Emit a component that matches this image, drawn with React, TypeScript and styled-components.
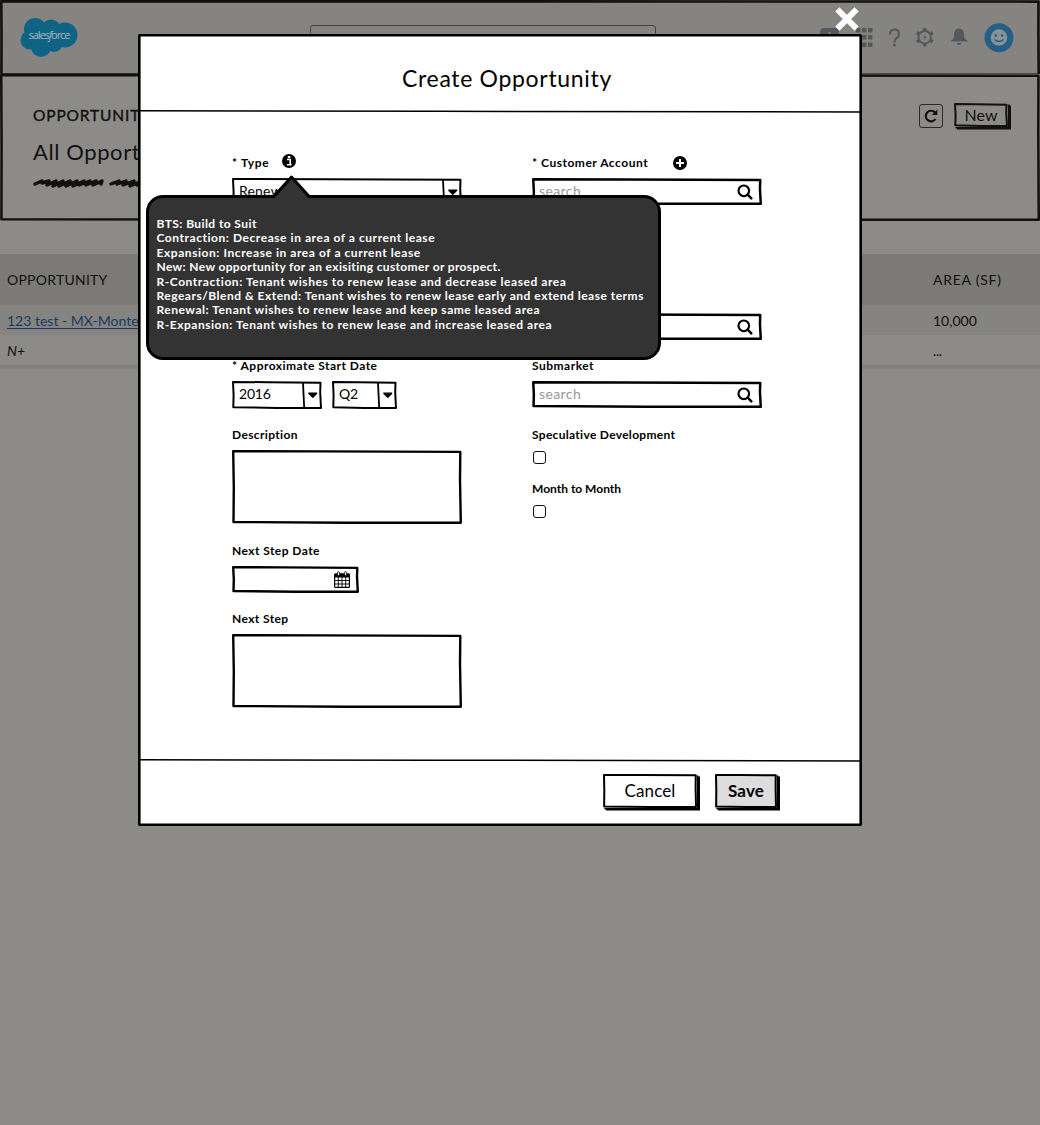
import React from "react";
import styled, { createGlobalStyle } from "styled-components";

const INK = "#000";
const DIM = "#12110f";

const Global = createGlobalStyle`
  *, *::before, *::after { box-sizing: border-box; }
  body { margin: 0; background: #8c8b88; }
  body, input, button, textarea { font-family: Lato, "Open Sans", sans-serif; }
`;

/* Hand-drawn rectangle outline stretched over its parent. */
const Outline = styled.svg`
  position: absolute;
  inset: 0;
  width: 100%;
  height: 100%;
  overflow: visible;
  pointer-events: none;
`;

function Sketch({ w, h, t = 2, color = INK, k = 1 }: { w: number; h: number; t?: number; color?: string; k?: number }) {
  const i = t / 2;
  return (
    <Outline viewBox={`0 0 ${w} ${h}`} fill="none" stroke={color} strokeWidth={t} strokeLinejoin="round" strokeLinecap="round">
      <path d={`M${i} ${i} L${w * 0.4} ${i + 0.2 * k} L${w - i - 0.5 * k} ${i + 0.7 * k} L${w - i - 0.8 * k} ${h * 0.4} L${w - i} ${h - i} L${w * 0.5} ${h - i} L${i + 0.3 * k} ${h - i - 0.8 * k} L${i + 0.6 * k} ${h * 0.5} Z`} />
    </Outline>
  );
}

const Page = styled.div`
  position: relative;
  width: 1040px;
  height: 1125px;
  overflow: hidden;
  background: #8c8b88;
  color: ${DIM};
`;
const TopBar = styled.header`
  position: relative;
  height: 76px;
  padding: 0 25px 0 20px;
  background: #868481;
  display: flex;
  align-items: center;
`;
const SearchStub = styled.div`
  width: 346px;
  height: 27px;
  margin: 0 159px 0 232px;
  border: 1px solid #454442;
  border-radius: 3px;
`;
const TopIcons = styled.div`
  display: flex;
  align-items: center;
`;
const ListHead = styled.section`
  position: relative;
  height: 147px;
  margin-top: -2px;
  padding: 29px 32px 0 33px;
  background: #8d8b88;
  display: flex;
  justify-content: space-between;
`;
const Text = styled.span<{ $size: number; $ls?: number; $weight?: number; $color?: string; $lh?: number; $stroke?: number }>`
  display: block;
  white-space: nowrap;
  font-size: ${(p) => p.$size}px;
  line-height: ${(p) => p.$lh ?? 20}px;
  letter-spacing: ${(p) => p.$ls ?? 0}px;
  font-weight: ${(p) => p.$weight ?? 400};
  color: ${(p) => p.$color ?? "inherit"};
  -webkit-text-stroke: ${(p) => p.$stroke ?? 0}px currentColor;
`;
const HeadText = styled.div`
  display: flex;
  flex-direction: column;
  gap: 12px;
`;
const HeadActions = styled.div`
  display: flex;
  gap: 11px;
`;
const Refresh = styled.button`
  width: 24px;
  height: 24px;
  margin-top: 1px;
  padding: 0;
  border: 1.5px solid #2a2927;
  border-radius: 3px;
  background: none;
  display: grid;
  place-items: center;
`;
const Button = styled.button<{ $w: number; $h: number; $bg: string; $ink: string }>`
  position: relative;
  width: ${(p) => p.$w}px;
  height: ${(p) => p.$h}px;
  padding: 0;
  border: 0;
  color: ${(p) => p.$ink};
  background: ${(p) => p.$bg};
  box-shadow: 3px 2.5px 0 ${(p) => p.$ink}, 1.5px 1.5px 0 ${(p) => p.$ink};
  display: grid;
  place-items: center;
`;
const Table = styled.div`
  padding-top: 33px;
`;
const Row = styled.div<{ $h: number; $bg: string; $drop?: number }>`
  height: ${(p) => p.$h}px;
  background: ${(p) => p.$bg};
  display: grid;
  grid-template-columns: 926px 1fr;
  align-items: center;
  padding: ${(p) => p.$drop ?? 0}px 0 0 7px;
`;
const Link = styled.a`
  color: #163b62;
  text-decoration: underline;
  text-underline-offset: 2px;
`;
const Close = styled.button`
  position: absolute;
  left: 835px;
  top: 7px;
  width: 24px;
  height: 24px;
  padding: 0;
  border: 0;
  background: none;
`;
const Modal = styled.div`
  position: absolute;
  left: 138px;
  top: 34px;
  width: 724px;
  height: 792px;
  background: #fff;
  color: ${INK};
  display: flex;
  flex-direction: column;
`;
const ModalHead = styled.div`
  height: 76px;
  padding: 31px 0 0 264px;
`;
const Rule = styled.svg`
  display: block;
  width: 724px;
  height: 3px;
`;
const Form = styled.div`
  height: 646px;
  padding: 41px 0 0 94px;
  display: grid;
  grid-template-columns: 230px 230px;
  column-gap: 70px;
  align-items: start;
`;
const Column = styled.div`
  display: flex;
  flex-direction: column;
`;
const Field = styled.div<{ $h: number }>`
  height: ${(p) => p.$h}px;
  display: flex;
  flex-direction: column;
  gap: 6px;
`;
const LabelRow = styled.div<{ $gap?: number }>`
  display: flex;
  align-items: center;
  gap: ${(p) => p.$gap ?? 0}px;
  height: 18px;
`;
const InfoIcon = styled.svg`
  margin-bottom: 4px;
`;
const Box = styled.div<{ $w: number; $h: number }>`
  position: relative;
  width: ${(p) => p.$w}px;
  height: ${(p) => p.$h}px;
  padding: 0 9px 0 7px;
  display: flex;
  align-items: center;
  justify-content: space-between;
`;
const Value = styled(Text)`
  padding-bottom: 2px;
`;
const Pair = styled.div`
  display: flex;
  gap: 10px;
`;
const Arrow = styled.svg`
  position: absolute;
  right: 0;
  top: 0;
  width: 20px;
  height: 100%;
`;
const Check = styled.div`
  width: 13px;
  height: 13px;
  margin: 1px 0 0 1px;
  border: 1.4px solid #111;
  border-radius: 3px;
`;
const ModalFoot = styled.div`
  display: flex;
  gap: 18px;
  padding: 12px 0 0 465px;
`;
const Tip = styled.div`
  position: absolute;
  left: 8px;
  top: 161px;
  width: 515px;
  height: 165px;
  padding: 19px 0 0 7.5px;
  border: 3px solid ${INK};
  border-radius: 17px;
  background: #333;
  color: #fff;
`;
const TipPoint = styled.svg`
  position: absolute;
  left: 123px;
  top: -25px;
`;

const Magnifier = () => (
  <svg width="16" height="16" viewBox="0 0 16 16" fill="none" stroke={INK}>
    <circle cx="6.800" cy="6.800" r="5.300" strokeWidth="2.200" />
    <path d="M10.700 10.700L14.300 14.300" strokeWidth="2.500" strokeLinecap="round" />
  </svg>
);

function Select({ w, value, ls }: { w: number; value: string; ls: number }) {
  return (
    <Box $w={w} $h={28}>
      <Value $size={14} $ls={ls} $lh={24}>{value}</Value>
      <Sketch w={w} h={28} />
      <Arrow viewBox="0 0 20 28">
        <path d="M1 1.500 L2.200 27" stroke={INK} strokeWidth="1.800" fill="none" />
        <path d="M6.600 11.600h8.200q1 .5.4 1.200l-3.600 3.800q-.8.8-1.600 0l-3.700-3.900q-.5-.6.3-1.100z" />
      </Arrow>
    </Box>
  );
}

function SearchBox({ placeholder = "" }: { placeholder?: string }) {
  return (
    <Box $w={230} $h={27}>
      <Value $size={14} $ls={0.4} $color="#999">{placeholder}</Value>
      <Magnifier />
      <Sketch w={230} h={27} t={2.5} />
    </Box>
  );
}

const Label = ({ children, ls = 0.3 }: { children: React.ReactNode; ls?: number }) => (
  <Text $size={12} $weight={700} $lh={18} $ls={ls}>{children}</Text>
);

const TIPS: [string, number][] = [
  ["BTS: Build to Suit", 0.41],
  ["Contraction: Decrease in area of a current lease", 0.55],
  ["Expansion: Increase in area of a current lease", 0.56],
  ["New: New opportunity for an exisiting customer or prospect.", 0.36],
  ["R-Contraction: Tenant wishes to renew lease and decrease leased area", 0.55],
  ["Regears/Blend & Extend: Tenant wishes to renew lease early and extend lease terms", 0.5],
  ["Renewal: Tenant wishes to renew lease and keep same leased area", 0.51],
  ["R-Expansion: Tenant wishes to renew lease and increase leased area", 0.53],
];

const Logo = () => (
  <svg width="58" height="42" viewBox="0 0 58 42">
    <g fill="#0f6385">
      <circle cx="15" cy="12" r="11" />
      <circle cx="31" cy="12" r="9.500" />
      <circle cx="45" cy="18" r="12.500" />
      <circle cx="10" cy="23" r="9.500" />
      <circle cx="21" cy="30" r="10" />
      <circle cx="34" cy="26" r="9" />
      <rect x="10" y="10" width="34" height="20" />
    </g>
    <text x="8.500" y="22" fontSize="11" fill="#aab4b8" textLength="42" fontFamily="Open Sans, sans-serif">
      sales<tspan fontStyle="italic">f</tspan>orce
    </text>
  </svg>
);

export default function App() {
  return (
    <Page>
      <Global />
      <TopBar>
        <Logo />
        <SearchStub />
        <TopIcons>
          <svg width="200" height="40" viewBox="815 18 200 40" fill="#54585d">
            <rect x="820" y="28" width="19" height="19" rx="4" />
            <path d="M829.500 32v7M826 36h7" stroke="#868481" strokeWidth="2" />
            {[856, 862, 868].map((x) => [28, 35, 42.5].map((y) => <rect key={`${x}${y}`} x={x} y={y} width="4.500" height="4.500" />))}
            <path d="M890 34.500q0-5 4.500-5t4.500 4.500q0 2.500-2.500 4.200q-2.200 1.500-2.200 4" fill="none" stroke="#54585d" strokeWidth="2.200" />
            <circle cx="894.300" cy="45" r="1.500" />
            <g transform="translate(924.700 37.200)" fill="none" stroke="#54585d">
              <circle r="6.200" strokeWidth="2" />
              {[0, 60, 120, 180, 240, 300].map((a) => <path key={a} d="M0 -6.500V-9.200" strokeWidth="3.600" transform={`rotate(${a})`} />)}
              <path d="M.8 -3L-1.800 .6H.2L-.6 3L2 -.6H0z" fill="#54585d" stroke="none" />
            </g>
            <path d="M951 40.500q3-1 3-6q0-5.500 5-6q5 .5 5 6q0 5 3.500 6v1h-16.500z" />
            <path d="M956.500 43h5q-.5 2-2.500 2t-2.500-2z" />
            <circle cx="999" cy="37.800" r="14.500" fill="#255f86" />
            <circle cx="999" cy="37.500" r="8.300" fill="#8a9298" />
            <circle cx="995.800" cy="35.500" r="1.300" fill="#255f86" />
            <circle cx="1002.200" cy="35.500" r="1.300" fill="#255f86" />
            <path d="M994.500 39.500q4.500 4 9 0" fill="none" stroke="#255f86" strokeWidth="1.500" />
          </svg>
        </TopIcons>
        <Sketch w={1040} h={76} t={2.6} color={DIM} k={0.4} />
      </TopBar>
      <ListHead>
        <HeadText>
          <Text $size={15.5} $ls={0.85} $lh={24} $stroke={0.4}>OPPORTUNITIES</Text>
          <Text $size={22} $ls={0.6} $lh={26}>All Opportunities</Text>
          <svg width="160" height="12" viewBox="0 0 160 12" fill="none" stroke={DIM} strokeWidth="3.400" strokeLinecap="round" strokeLinejoin="round">
            <path d="M2 7L9 4L9 6L16 4L14 8L23 4L20 9L30 4L26 9L37 4L33 9L44 4L40 9L51 4L46 8L57 4L53 8L63 4L60 8L69 4L68 7" />
            <path d="M78 7L86 4L84 7L93 4L90 8L101 4L97 9L109 4L104 8L118 4" />
          </svg>
        </HeadText>
        <HeadActions>
          <Refresh>
            <svg width="16" height="16" viewBox="0 0 16 16" fill="none" stroke={DIM} strokeWidth="2.200">
              <path d="M12.500 11A5.300 5.300 0 1 1 12 4.500" />
              <path d="M14.300 1.500V7H8.800z" fill={DIM} stroke="none" />
            </svg>
          </Refresh>
          <Button $w={54} $h={24} $bg="#8d8b88" $ink={DIM}>
            <Text $size={16}>New</Text>
            <Sketch w={54} h={24} color={DIM} />
          </Button>
        </HeadActions>
        <Sketch w={1040} h={147} t={2.5} color={DIM} k={0.6} />
      </ListHead>
      <Table>
        <Row $h={51} $bg="#7c7a77">
          <Text $size={14} $ls={0.25}>OPPORTUNITY</Text>
          <Text $size={14} $ls={0.75}>AREA (SF)</Text>
        </Row>
        <Row $h={30} $bg="#868481" $drop={2}>
          <Text $size={14} $ls={0}><Link>123 test - MX-Monterrey</Link></Text>
          <Text $size={14} $ls={0}>10,000</Text>
        </Row>
        <Row $h={30} $bg="#8d8b88" $drop={2}>
          <Text $size={14}><i>N+</i></Text>
          <Text $size={14} $ls={-0.4}>...</Text>
        </Row>
        <Row $h={4} $bg="#83817e" />
      </Table>

      <Modal>
        <ModalHead>
          <Text $size={23} $ls={0.68} $lh={26}>Create Opportunity</Text>
        </ModalHead>
        <Rule viewBox="0 0 724 3"><path d="M0 .8L300 1.300L724 2" stroke={INK} strokeWidth="1.500" /></Rule>
        <Form>
          <Column>
            <Field $h={203}>
              <LabelRow $gap={13}>
                <Label ls={0.65}>* Type</Label>
                <InfoIcon width="14" height="14" viewBox="0 0 14 14">
                  <circle cx="7" cy="7" r="7" />
                  <path d="M5 5.500h3.200v5M4.800 10.800h4.800" stroke="#fff" strokeWidth="1.600" fill="none" />
                  <rect x="5.800" y="2" width="2.500" height="2.200" fill="#fff" />
                </InfoIcon>
              </LabelRow>
              <Select w={230} value="Renewal" ls={0.2} />
            </Field>
            <Field $h={69}>
              <LabelRow><Label ls={0.47}>* Approximate Start Date</Label></LabelRow>
              <Pair>
                <Select w={90} value="2016" ls={-0.2} />
                <Select w={65} value="Q2" ls={-0.2} />
              </Pair>
            </Field>
            <Field $h={116}>
              <LabelRow><Label ls={0.35}>Description</Label></LabelRow>
              <Box $w={230} $h={74}><Sketch w={230} h={74} t={2.4} /></Box>
            </Field>
            <Field $h={68}>
              <LabelRow><Label ls={0.44}>Next Step Date</Label></LabelRow>
              <Box $w={127} $h={27}>
                <span />
                <svg width="16" height="17" viewBox="0 0 16 17">
                  <rect x=".6" y="3" width="14.800" height="13.400" rx="1" fill="#fff" stroke={INK} strokeWidth="1.200" />
                  <rect x=".6" y="2.500" width="14.800" height="4" />
                  <path d="M4.300 6v10M8 6v10M11.700 6v10M1 9.500h14M1 13h14" stroke={INK} strokeWidth=".9" />
                  <rect x="3.400" y=".6" width="2" height="4" rx="1" fill="#fff" stroke={INK} strokeWidth=".8" />
                  <rect x="10.600" y=".6" width="2" height="4" rx="1" fill="#fff" stroke={INK} strokeWidth=".8" />
                </svg>
                <Sketch w={127} h={27} t={2.4} />
              </Box>
            </Field>
            <Field $h={100}>
              <LabelRow><Label ls={0.4}>Next Step</Label></LabelRow>
              <Box $w={230} $h={74}><Sketch w={230} h={74} t={2.4} /></Box>
            </Field>
          </Column>
          <Column>
            <Field $h={135}>
              <LabelRow $gap={25}>
                <Label ls={0.52}>* Customer Account</Label>
                <svg width="14" height="14" viewBox="0 0 14 14">
                  <circle cx="7" cy="7" r="7" />
                  <path d="M7 3v8M3 7h8" stroke="#fff" strokeWidth="2" />
                </svg>
              </LabelRow>
              <SearchBox placeholder="search" />
            </Field>
            <Field $h={68}>
              <LabelRow />
              <SearchBox />
            </Field>
            <Field $h={69}>
              <LabelRow><Label ls={0.5}>Submarket</Label></LabelRow>
              <SearchBox placeholder="search" />
            </Field>
            <Field $h={54}>
              <LabelRow><Label>Speculative Development</Label></LabelRow>
              <Check />
            </Field>
            <Field $h={54}>
              <LabelRow><Label ls={0}>Month to Month</Label></LabelRow>
              <Check />
            </Field>
          </Column>
        </Form>
        <Rule viewBox="0 0 724 3"><path d="M0 .8L300 1.200L724 2" stroke={INK} strokeWidth="1.500" /></Rule>
        <ModalFoot>
          <Button $w={94} $h={34} $bg="#fff" $ink={INK}>
            <Text $size={17} $ls={0.1}>Cancel</Text>
            <Sketch w={94} h={34} k={0.5} />
          </Button>
          <Button $w={62} $h={34} $bg="#ddd" $ink={INK}>
            <Text $size={17} $weight={700} $ls={0.2}>Save</Text>
            <Sketch w={62} h={34} k={0.5} />
          </Button>
        </ModalFoot>
        <Sketch w={724} h={792} t={2.6} k={0} />
        <Tip>
          {TIPS.map(([t, ls]) => <Text key={t} $size={12} $weight={700} $lh={14.4} $ls={ls}>{t}</Text>)}
          <TipPoint width="40" height="26" viewBox="0 0 40 26">
            <path d="M0 26L19.500 4L39 26" fill="#333" />
            <path d="M1 24.500L19.500 4L38 24.500" fill="none" stroke={INK} strokeWidth="3" strokeLinejoin="round" />
          </TipPoint>
        </Tip>
      </Modal>
      <Close>
        <svg width="24" height="24" viewBox="0 0 24 24"><path d="M4.500 4.500L19.500 19.500M19.500 4.500L4.500 19.500" stroke="#fff" strokeWidth="6" strokeLinecap="square" strokeLinejoin="round" /></svg>
      </Close>
    </Page>
  );
}
